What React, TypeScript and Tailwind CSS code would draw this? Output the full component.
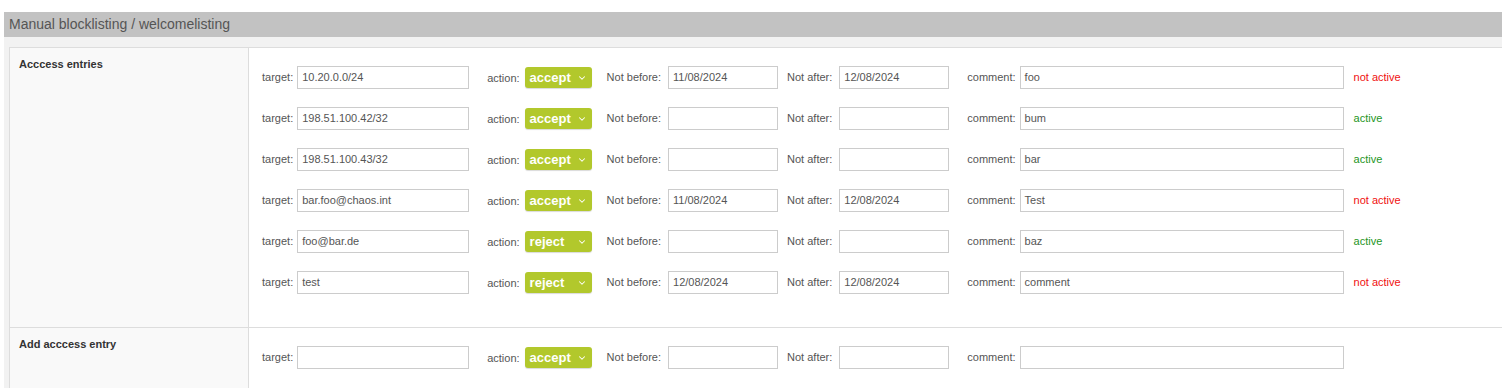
import { ChevronDown } from "lucide-react";

type Entry = {
  target: string;
  action: "accept" | "reject";
  notBefore: string;
  notAfter: string;
  comment: string;
  active?: boolean;
};

const entries: Entry[] = [
  { target: "10.20.0.0/24", action: "accept", notBefore: "11/08/2024", notAfter: "12/08/2024", comment: "foo", active: false },
  { target: "198.51.100.42/32", action: "accept", notBefore: "", notAfter: "", comment: "bum", active: true },
  { target: "198.51.100.43/32", action: "accept", notBefore: "", notAfter: "", comment: "bar", active: true },
  { target: "bar.foo@chaos.int", action: "accept", notBefore: "11/08/2024", notAfter: "12/08/2024", comment: "Test", active: false },
  { target: "foo@bar.de", action: "reject", notBefore: "", notAfter: "", comment: "baz", active: true },
  { target: "test", action: "reject", notBefore: "12/08/2024", notAfter: "12/08/2024", comment: "comment", active: false },
];

function Field({ value, width }: { value: string; width: string }) {
  return (
    <div className={`${width} h-[23px] border border-[#cccccc] bg-white px-[4px] flex items-center text-[11px] text-[#555555]`}>
      {value}
    </div>
  );
}

function ActionSelect({ value }: { value: string }) {
  return (
    <div className="w-[67px] h-[21px] rounded-[3px] bg-[#b2c82c] shadow-[0_1px_1px_rgba(0,0,0,0.15)] flex items-center justify-between pl-[5px] pr-[5px] text-white">
      <span className="text-[13px] font-bold leading-none">{value}</span>
      <ChevronDown className="h-[10px] w-[10px]" strokeWidth={2.5} />
    </div>
  );
}

function EntryRow({ e, showStatus }: { e: Entry; showStatus: boolean }) {
  return (
    <div className="h-[41px] flex items-center text-[11px] text-[#555555]">
      <span className="mr-[4px]">target:</span>
      <Field value={e.target} width="w-[172px]" />
      <span className="ml-[18px] mr-[5px] mt-[2px]">action:</span>
      <ActionSelect value={e.action} />
      <span className="ml-[15px] mr-[7px]">Not before:</span>
      <Field value={e.notBefore} width="w-[110px]" />
      <span className="ml-[9px] mr-[7px]">Not after:</span>
      <Field value={e.notAfter} width="w-[110px]" />
      <span className="ml-[18px] mr-[4px]">comment:</span>
      <Field value={e.comment} width="w-[324px]" />
      {showStatus && (
        <span className={`ml-[10px] ${e.active ? "text-[#1e961e]" : "text-[#f01010]"}`}>
          {e.active ? "active" : "not active"}
        </span>
      )}
    </div>
  );
}

export default function App() {
  return (
    <div className="w-[1502px] h-[388px] overflow-hidden bg-white pt-[12px] pl-[4px] font-['Liberation_Sans',Arial,sans-serif]">
      <div className="h-[25px] bg-[#c2c2c2] pl-[5px] flex items-center text-[14px] text-[#555555]">
        Manual blocklisting / welcomelisting
      </div>
      <div className="bg-[#f2f2f2] pt-[10px] pl-[5px]">
        <div className="w-[1600px] border-t border-l border-[#dddddd] bg-white">
          {/* existing entries */}
          <div className="flex border-b border-[#dddddd]">
            <div className="w-[239px] shrink-0 bg-[#f9f9f9] border-r border-[#dddddd] pl-[9px] pt-[8px] text-[11px] font-bold text-[#333333]">
              Acccess entries
            </div>
            <div className="flex-1 pl-[13px] pt-[9px] pb-[24px]">
              {entries.map((e, i) => (
                <EntryRow key={i} e={e} showStatus />
              ))}
            </div>
          </div>

          {/* add entry */}
          <div className="flex">
            <div className="w-[239px] shrink-0 bg-[#f9f9f9] border-r border-[#dddddd] pl-[9px] pt-[8px] text-[11px] font-bold text-[#333333]">
              Add acccess entry
            </div>
            <div className="flex-1 pl-[13px] pt-[9px] pb-[24px]">
              <EntryRow
                e={{ target: "", action: "accept", notBefore: "", notAfter: "", comment: "" }}
                showStatus={false}
              />
            </div>
          </div>
        </div>
      </div>
    </div>
  );
}
